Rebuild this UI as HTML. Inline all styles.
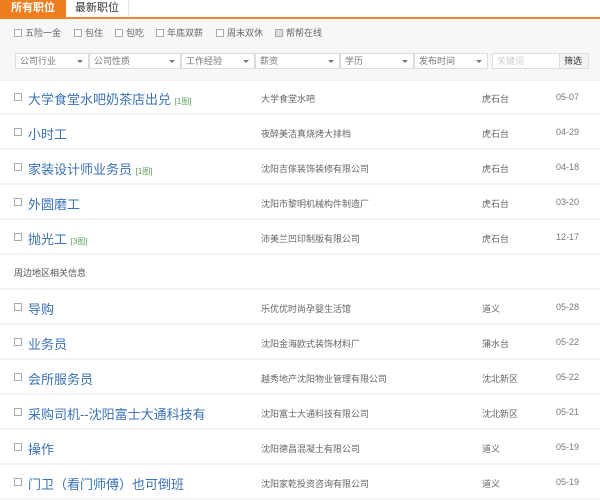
<!DOCTYPE html>
<html><head><meta charset="utf-8"><style>
*{margin:0;padding:0;box-sizing:border-box}
body{width:600px;height:497px;overflow:hidden;background:#fff;font-family:"Liberation Sans","Noto Sans CJK SC",sans-serif;color:#555}
.tabs{height:19px;border-bottom:2px solid #f08532;position:relative}
.tab{position:absolute;top:0;height:17px;line-height:17px;font-size:11px;text-align:center}
.t1{left:0;width:66px;background:#f07d1e;color:#fff;font-weight:bold;height:19px}
.t2{left:66px;width:63px;color:#333;border-right:1px solid #e5e5e5}
.filter{background:#f7f7f7;height:62px;position:relative;border-bottom:1px solid #eee}
.cb{position:absolute;top:8px;font-size:9px;color:#666;line-height:12px}
.cb i{display:inline-block;width:8px;height:8px;border:1px solid #aaa;background:#fff;vertical-align:-1px;margin-right:3px}
.sel{position:absolute;top:34px;height:16px;background:#fff;border:1px solid #ddd;font-size:9px;line-height:14px;padding-left:4px;color:#777}
.sel b{position:absolute;right:5px;top:6px;border:3px solid transparent;border-top:3px solid #777;width:0;height:0}
.row{position:absolute;left:0;width:600px;height:35px;border-bottom:2px solid #f3f3f3}
.row .c{position:absolute;left:14px;top:13px;width:8px;height:8px;border:1px solid #aaa}
.row .t{position:absolute;left:28px;top:9px;font-size:13px;color:#3a72b5;white-space:nowrap}
.row .t small{font-size:8px;color:#5aa05a}
.row .co{position:absolute;left:261px;top:12px;font-size:9px;color:#666}
.row .l{position:absolute;left:482px;top:12px;font-size:9px;color:#666}
.row .d{position:absolute;left:556px;top:12px;font-size:9px;color:#777}
.hd{position:absolute;left:14px;font-size:9px;color:#555}
</style></head><body>
<div class="tabs"><div class="tab t1">所有职位</div><div class="tab t2">最新职位</div></div>
<div class="filter">
<span class="cb" style="left:14px"><i></i>五险一金</span>
<span class="cb" style="left:74px"><i></i>包住</span>
<span class="cb" style="left:115px"><i></i>包吃</span>
<span class="cb" style="left:156px"><i></i>年底双薪</span>
<span class="cb" style="left:216px"><i></i>周末双休</span>
<span class="cb" style="left:275px"><i style="background:#ddd"></i>帮帮在线</span>
<div class="sel" style="left:15px;width:74px">公司行业<b></b></div>
<div class="sel" style="left:89px;width:92px">公司性质<b></b></div>
<div class="sel" style="left:181px;width:74px">工作经验<b></b></div>
<div class="sel" style="left:255px;width:85px">薪资<b></b></div>
<div class="sel" style="left:340px;width:74px">学历<b></b></div>
<div class="sel" style="left:414px;width:74px">发布时间<b></b></div>
<div class="sel" style="left:492px;width:68px;color:#ccc">关键词</div>
<div class="sel" style="left:559px;width:30px;color:#333;background:#f3f3f3">筛选</div>
</div>
<div class="row" style="top:80px"><i class="c"></i><span class="t">大学食堂水吧奶茶店出兑 <small>[1图]</small></span><span class="co">大学食堂水吧</span><span class="l">虎石台</span><span class="d">05-07</span></div>
<div class="row" style="top:115px"><i class="c"></i><span class="t">小时工</span><span class="co">夜醉美洁真烧烤大排档</span><span class="l">虎石台</span><span class="d">04-29</span></div>
<div class="row" style="top:150px"><i class="c"></i><span class="t">家装设计师业务员 <small>[1图]</small></span><span class="co">沈阳吉傢装饰装修有限公司</span><span class="l">虎石台</span><span class="d">04-18</span></div>
<div class="row" style="top:185px"><i class="c"></i><span class="t">外圆磨工</span><span class="co">沈阳市黎明机械构件制造厂</span><span class="l">虎石台</span><span class="d">03-20</span></div>
<div class="row" style="top:220px"><i class="c"></i><span class="t">抛光工 <small>[3图]</small></span><span class="co">沛美兰凹印制版有限公司</span><span class="l">虎石台</span><span class="d">12-17</span></div>
<div class="row" style="top:255px"><span class="hd" style="top:11px">周边地区相关信息</span></div>
<div class="row" style="top:290px"><i class="c"></i><span class="t">导购</span><span class="co">乐优优时尚孕婴生活馆</span><span class="l">道义</span><span class="d">05-28</span></div>
<div class="row" style="top:325px"><i class="c"></i><span class="t">业务员</span><span class="co">沈阳金海欧式装饰材料厂</span><span class="l">蒲水台</span><span class="d">05-22</span></div>
<div class="row" style="top:360px"><i class="c"></i><span class="t">会所服务员</span><span class="co">越秀地产沈阳物业管理有限公司</span><span class="l">沈北新区</span><span class="d">05-22</span></div>
<div class="row" style="top:395px"><i class="c"></i><span class="t">采购司机--沈阳富士大通科技有</span><span class="co">沈阳富士大通科技有限公司</span><span class="l">沈北新区</span><span class="d">05-21</span></div>
<div class="row" style="top:430px"><i class="c"></i><span class="t">操作</span><span class="co">沈阳德昌混凝土有限公司</span><span class="l">道义</span><span class="d">05-19</span></div>
<div class="row" style="top:465px"><i class="c"></i><span class="t">门卫（看门师傅）也可倒班</span><span class="co">沈阳家乾投资咨询有限公司</span><span class="l">道义</span><span class="d">05-19</span></div>
</body></html>
